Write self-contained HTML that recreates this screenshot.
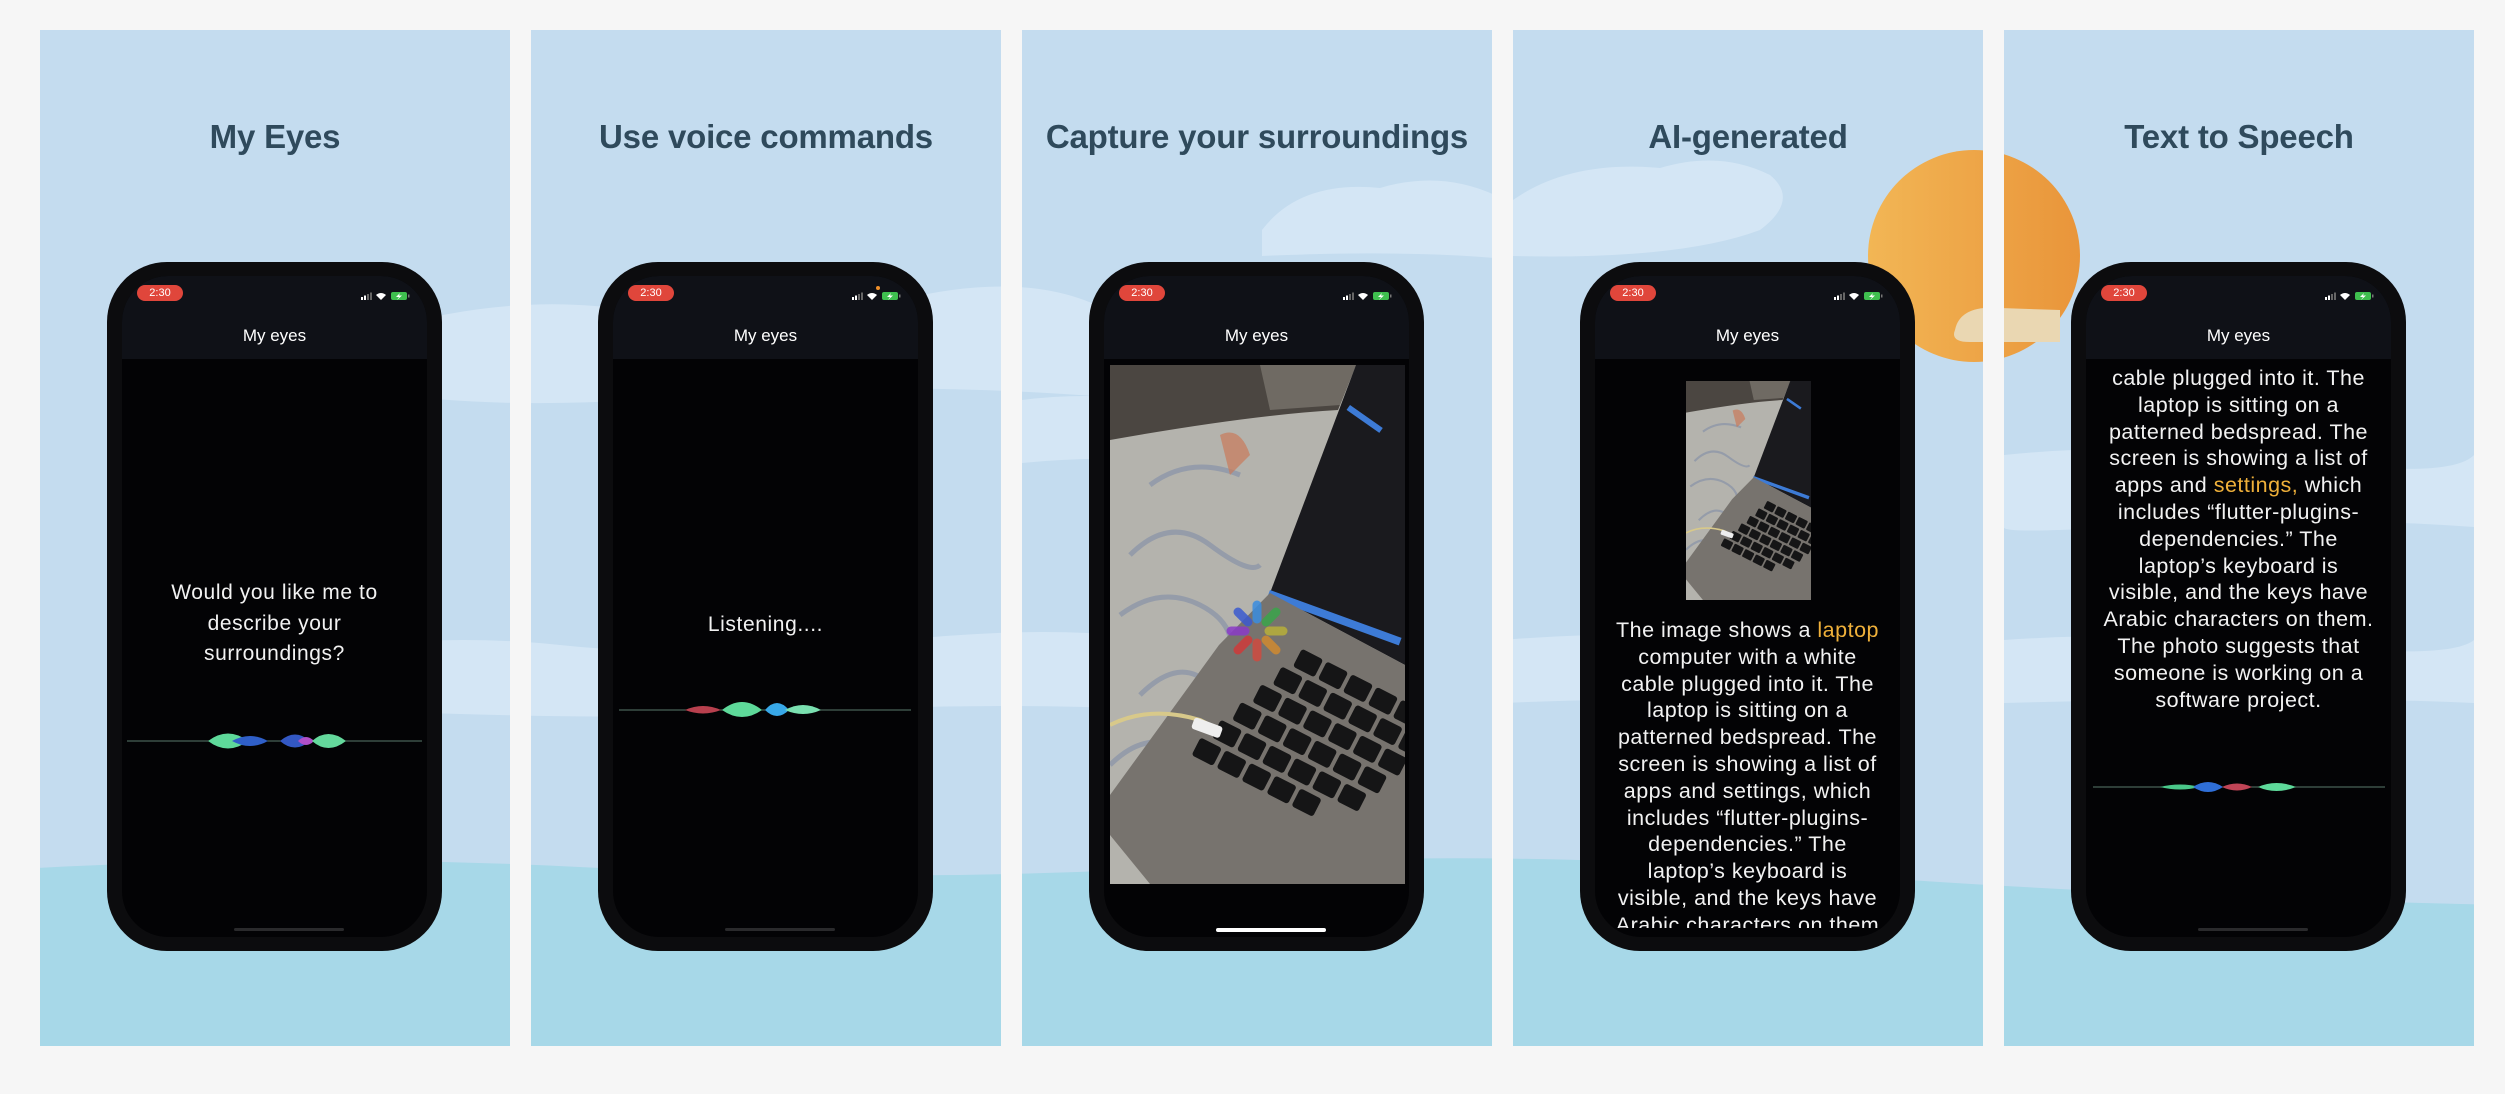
<!DOCTYPE html>
<html><head><meta charset="utf-8">
<style>
*{margin:0;padding:0;box-sizing:border-box}
body{width:2505px;height:1094px;background:#f6f6f6;position:relative;overflow:hidden;font-family:"Liberation Sans",sans-serif}
.abs{position:absolute}
.gap{position:absolute;background:#f6f6f6}
.title{position:absolute;top:118px;width:470px;text-align:center;font-size:33px;font-weight:bold;color:#2f4a5c;white-space:nowrap;letter-spacing:-0.2px}
.phone{position:absolute;top:262px;width:335px;height:689px;border-radius:60px;background:#0c0c0e}
.screen{position:absolute;left:15px;top:14px;right:15px;bottom:14px;border-radius:46px;background:#030305;overflow:hidden}
.hdr{position:absolute;left:0;top:0;right:0;height:83px;background:#0f1117}
.pill{position:absolute;left:15px;top:9px;width:46px;height:16px;border-radius:8px;background:#e0463b;color:#fff;font-size:11px;line-height:16px;text-align:center}
.stat{position:absolute;right:14px;top:15px}
.nm{position:absolute;left:0;right:0;top:50px;text-align:center;color:#fff;font-size:17px}
.home{position:absolute;left:112px;width:110px;height:3px;border-radius:2px;top:652px;background:#2a2a2c}
.txt{position:absolute;left:0;right:0;text-align:center;color:#f2f2f2;white-space:nowrap}
.y{color:#efb03a}
</style></head><body>

<svg class="abs" style="left:0;top:0" width="2505" height="1094">
<defs>
<linearGradient id="sun" x1="0" x2="1"><stop offset="0" stop-color="#f2b655"/><stop offset="1" stop-color="#e9953a"/></linearGradient>
</defs>
<rect x="0" y="0" width="2505" height="1094" fill="#c4dcef"/>
<g fill="#d4e6f5">
<path d="M380 330 Q520 290 640 312 T900 300 T1120 318 L1120 398 Q900 380 700 396 T380 392 Z"/>
<path d="M250 660 Q420 630 560 645 T900 640 T1200 650 L1200 712 Q1000 700 800 712 T250 705 Z"/>
<path d="M1262 230 Q1300 180 1380 188 Q1440 170 1495 195 L1495 258 Q1400 250 1262 256 Z"/>
<path d="M1022 400 Q1100 390 1180 405 L1180 462 Q1100 455 1022 463 Z"/>
<path d="M1513 200 Q1570 160 1660 168 Q1720 150 1770 175 Q1800 200 1760 230 Q1680 260 1513 256 Z"/>
<path d="M1860 300 Q1950 280 2010 300 L2010 340 Q1940 330 1860 340 Z"/>
<path d="M2004 455 Q2150 440 2300 460 T2474 455 L2474 527 Q2300 515 2150 525 T2004 527 Z"/>
<path d="M2004 640 Q2150 630 2300 645 T2474 640 L2474 703 Q2300 695 2004 703 Z"/>
<path d="M1500 640 Q1700 625 1900 645 L1900 703 Q1700 695 1500 703 Z"/>
</g>
<circle cx="1974" cy="256" r="106" fill="url(#sun)"/>
<path d="M1955 330 Q1960 305 2000 308 L2060 310 L2060 342 L1970 342 Q1950 342 1955 330 Z" fill="#ead7b2"/>
<path d="M0 870 Q300 852 600 868 T1200 866 T1800 872 T2505 905 L2505 1094 L0 1094 Z" fill="#a7d8e8"/>
</svg>

<div class="gap" style="left:0;top:0;width:2505px;height:30px"></div>
<div class="gap" style="left:0;top:1046px;width:2505px;height:48px"></div>
<div class="gap" style="left:0;top:0;width:40px;height:1094px"></div>
<div class="gap" style="left:510px;top:0;width:21px;height:1094px"></div>
<div class="gap" style="left:1001px;top:0;width:21px;height:1094px"></div>
<div class="gap" style="left:1492px;top:0;width:21px;height:1094px"></div>
<div class="gap" style="left:1983px;top:0;width:21px;height:1094px"></div>
<div class="gap" style="left:2474px;top:0;width:31px;height:1094px"></div>

<div class="title" style="left:40px">My Eyes</div>
<div class="title" style="left:531px">Use voice commands</div>
<div class="title" style="left:1022px">Capture your surroundings</div>
<div class="title" style="left:1513px">AI-generated</div>
<div class="title" style="left:2004px">Text to Speech</div>

<svg width="0" height="0" style="position:absolute">
<symbol id="stat" viewBox="0 0 52 10">
<rect x="0" y="6" width="2" height="3" fill="#fff"/><rect x="3" y="4.5" width="2" height="4.5" fill="#fff"/><rect x="6" y="3" width="2" height="6" fill="#666"/><rect x="9" y="1.5" width="2" height="7.5" fill="#666"/>
<path d="M15 4 Q20 0 25 4 L20 9 Z" fill="#fff"/>
<rect x="30" y="1" width="16" height="8" rx="2" fill="#3fbf4f"/><rect x="47" y="3.5" width="1.5" height="3" fill="#777"/>
<path d="M39 2 L35 6 L38 6 L36 9 L41 4.5 L38 4.5 Z" fill="#fff"/>
</symbol>
<symbol id="photo" viewBox="0 0 295 519">
<rect width="295" height="519" fill="#b4b3ad"/>
<path d="M0 0 H246 L228 45 Q140 50 0 75 Z" fill="#4b4641"/>
<path d="M150 0 H246 L230 40 L160 45 Z" fill="#6f6a63"/>
<g fill="none" stroke="#8893a8" stroke-width="5" opacity=".7">
<path d="M20 190 Q60 150 100 180 T150 200"/><path d="M10 250 Q50 220 90 240 T120 300"/><path d="M30 330 Q70 290 100 320"/><path d="M0 400 Q40 360 80 390"/><path d="M60 440 Q90 410 110 430"/><path d="M40 120 Q80 90 130 110"/>
</g>
<path d="M110 70 Q130 60 140 90 L120 110 Z" fill="#c97a5a" opacity=".7"/>
<path d="M246 0 H295 V300 L160 228 Z" fill="#1a1a1e"/>
<g fill="#3d7bd6"><rect x="240" y="40" width="40" height="6" transform="rotate(35 240 40)"/><rect x="160" y="225" width="140" height="8" transform="rotate(20 160 225)"/></g>
<path d="M109 280 L160 228 L295 300 V519 H40 L0 470 V430 Z" fill="#77736e"/>
<g transform="rotate(27 200 400)" fill="#151516">
<rect x="140" y="300" width="24" height="20" rx="3"/><rect x="168" y="300" width="24" height="20" rx="3"/><rect x="196" y="300" width="24" height="20" rx="3"/><rect x="224" y="300" width="24" height="20" rx="3"/><rect x="252" y="300" width="24" height="20" rx="3"/>
<rect x="130" y="325" width="24" height="20" rx="3"/><rect x="158" y="325" width="24" height="20" rx="3"/><rect x="186" y="325" width="24" height="20" rx="3"/><rect x="214" y="325" width="24" height="20" rx="3"/><rect x="242" y="325" width="24" height="20" rx="3"/><rect x="270" y="325" width="24" height="20" rx="3"/>
<rect x="120" y="350" width="24" height="20" rx="3"/><rect x="148" y="350" width="24" height="20" rx="3"/><rect x="176" y="350" width="24" height="20" rx="3"/><rect x="204" y="350" width="24" height="20" rx="3"/><rect x="232" y="350" width="24" height="20" rx="3"/><rect x="260" y="350" width="24" height="20" rx="3"/>
<rect x="110" y="375" width="24" height="20" rx="3"/><rect x="138" y="375" width="24" height="20" rx="3"/><rect x="166" y="375" width="24" height="20" rx="3"/><rect x="194" y="375" width="24" height="20" rx="3"/><rect x="222" y="375" width="24" height="20" rx="3"/><rect x="250" y="375" width="24" height="20" rx="3"/>
<rect x="100" y="400" width="24" height="20" rx="3"/><rect x="128" y="400" width="24" height="20" rx="3"/><rect x="156" y="400" width="24" height="20" rx="3"/><rect x="184" y="400" width="24" height="20" rx="3"/><rect x="212" y="400" width="24" height="20" rx="3"/><rect x="240" y="400" width="24" height="20" rx="3"/>
<rect x="90" y="425" width="24" height="20" rx="3"/><rect x="118" y="425" width="24" height="20" rx="3"/><rect x="146" y="425" width="24" height="20" rx="3"/><rect x="174" y="425" width="24" height="20" rx="3"/><rect x="202" y="425" width="24" height="20" rx="3"/>
</g>
<path d="M0 360 Q40 340 90 355 L110 365" fill="none" stroke="#d8c98a" stroke-width="4"/>
<rect x="85" y="352" width="30" height="12" rx="3" fill="#eee" transform="rotate(20 85 352)"/>
</symbol>
</svg>

<!-- Phone 1 -->
<div class="phone" style="left:107px"><div class="screen">
<div class="hdr"><div class="pill">2:30</div><svg class="stat" width="52" height="10"><use href="#stat"/></svg><div class="nm">My eyes</div></div>
<div class="txt" style="top:302px;font-size:21px;line-height:30.5px;letter-spacing:0.6px">Would you like me to<br>describe your<br>surroundings?</div>
<svg class="abs" style="left:0;top:445px" width="305" height="40"><g transform="translate(-122,-721)">
<line x1="127" y1="741" x2="422" y2="741" stroke="#5a7a6a" stroke-width="1"/>
<path d="M208 741 Q228 726 248 741 Q228 756 208 741Z" fill="#5ed99a"/>
<path d="M232 741 Q250 731 268 741 Q250 751 232 741Z" fill="#2f5fc8"/>
<path d="M280 741 Q295 728 310 741 Q295 754 280 741Z" fill="#3358c4"/>
<path d="M298 741 Q306 733 314 741 Q306 749 298 741Z" fill="#b04fc8"/>
<path d="M312 741 Q328 727 346 741 Q328 755 312 741Z" fill="#64d89c"/>
</g></svg>
<div class="home"></div>
</div></div>

<!-- Phone 2 -->
<div class="phone" style="left:598px"><div class="screen">
<div class="hdr"><div class="pill">2:30</div><div class="abs" style="right:38px;top:10px;width:4px;height:4px;border-radius:2px;background:#f0902a"></div><svg class="stat" width="52" height="10"><use href="#stat"/></svg><div class="nm">My eyes</div></div>
<div class="txt" style="top:334px;font-size:21px;line-height:30px;letter-spacing:0.6px">Listening....</div>
<svg class="abs" style="left:0;top:414px" width="305" height="40"><g transform="translate(-613,-690)">
<line x1="619" y1="710" x2="911" y2="710" stroke="#5a7a6a" stroke-width="1"/>
<path d="M685 710 Q703 702 721 710 Q703 717 685 710Z" fill="#b8404e"/>
<path d="M722 710 Q742 694 762 710 Q742 724 722 710Z" fill="#5ed99a"/>
<path d="M765 710 Q777 696 789 710 Q777 722 765 710Z" fill="#38a8e8"/>
<path d="M785 710 Q803 700 821 710 Q803 718 785 710Z" fill="#7ae0b0"/>
</g></svg>
<div class="home"></div>
</div></div>

<!-- Phone 3 -->
<div class="phone" style="left:1089px"><div class="screen">
<div class="hdr"><div class="pill">2:30</div><svg class="stat" width="52" height="10"><use href="#stat"/></svg><div class="nm">My eyes</div></div>
<svg class="abs" style="left:6px;top:89px" width="295" height="519"><use href="#photo"/></svg>
<svg class="abs" style="left:118px;top:320px" width="70" height="70" viewBox="-35 -35 70 70">
<g stroke-width="9" stroke-linecap="round" opacity=".85">
<line x1="0" y1="-12" x2="0" y2="-26" stroke="#3b8de0"/>
<line x1="9" y1="-9" x2="19" y2="-19" stroke="#3aa54a"/>
<line x1="12" y1="0" x2="26" y2="0" stroke="#b8b03a"/>
<line x1="9" y1="9" x2="19" y2="19" stroke="#d08a30"/>
<line x1="0" y1="12" x2="0" y2="26" stroke="#d04a40"/>
<line x1="-9" y1="9" x2="-19" y2="19" stroke="#d03a3a"/>
<line x1="-12" y1="0" x2="-26" y2="0" stroke="#8a3ac8"/>
<line x1="-9" y1="-9" x2="-19" y2="-19" stroke="#3a5ad0"/>
</g></svg>
<div class="home" style="background:#fff;height:4px"></div>
</div></div>

<!-- Phone 4 -->
<div class="phone" style="left:1580px"><div class="screen">
<div class="hdr"><div class="pill">2:30</div><svg class="stat" width="52" height="10"><use href="#stat"/></svg><div class="nm">My eyes</div></div>
<svg class="abs" style="left:91px;top:105px" width="125" height="219" viewBox="0 0 295 519" preserveAspectRatio="none"><use href="#photo"/></svg>
<div class="abs" style="left:0;right:0;top:341px;height:311px;overflow:hidden">
<div class="txt" style="top:0;font-size:21.5px;line-height:26.8px;letter-spacing:0.5px">The image shows a <span class="y">laptop</span><br>computer with a white<br>cable plugged into it. The<br>laptop is sitting on a<br>patterned bedspread. The<br>screen is showing a list of<br>apps and settings, which<br>includes  “flutter-plugins-<br>dependencies.” The<br>laptop’s keyboard is<br>visible, and the keys have<br>Arabic characters on them</div>
</div>
</div></div>

<!-- Phone 5 -->
<div class="phone" style="left:2071px"><div class="screen">
<div class="hdr"><div class="pill">2:30</div><svg class="stat" width="52" height="10"><use href="#stat"/></svg><div class="nm">My eyes</div></div>
<div class="txt" style="top:89px;font-size:21.5px;line-height:26.8px;letter-spacing:0.5px">cable plugged into it. The<br>laptop is sitting on a<br>patterned bedspread. The<br>screen is showing a list of<br>apps and <span class="y">settings,</span> which<br>includes  “flutter-plugins-<br>dependencies.” The<br>laptop’s keyboard is<br>visible, and the keys have<br>Arabic characters on them.<br>The photo suggests that<br>someone is working on a<br>software project.</div>
<svg class="abs" style="left:0;top:491px" width="305" height="40"><g transform="translate(-2086,-767)">
<line x1="2093" y1="787" x2="2385" y2="787" stroke="#5a7a6a" stroke-width="1"/>
<path d="M2160 787 Q2180 782 2200 787 Q2180 792 2160 787Z" fill="#4ac88a"/>
<path d="M2193 787 Q2208 777 2223 787 Q2208 797 2193 787Z" fill="#2f6fd8"/>
<path d="M2222 787 Q2237 780 2252 787 Q2237 794 2222 787Z" fill="#c04456"/>
<path d="M2258 787 Q2276 779 2296 787 Q2276 795 2258 787Z" fill="#5ed99a"/>
</g></svg>
<div class="home"></div>
</div></div>

</body></html>
